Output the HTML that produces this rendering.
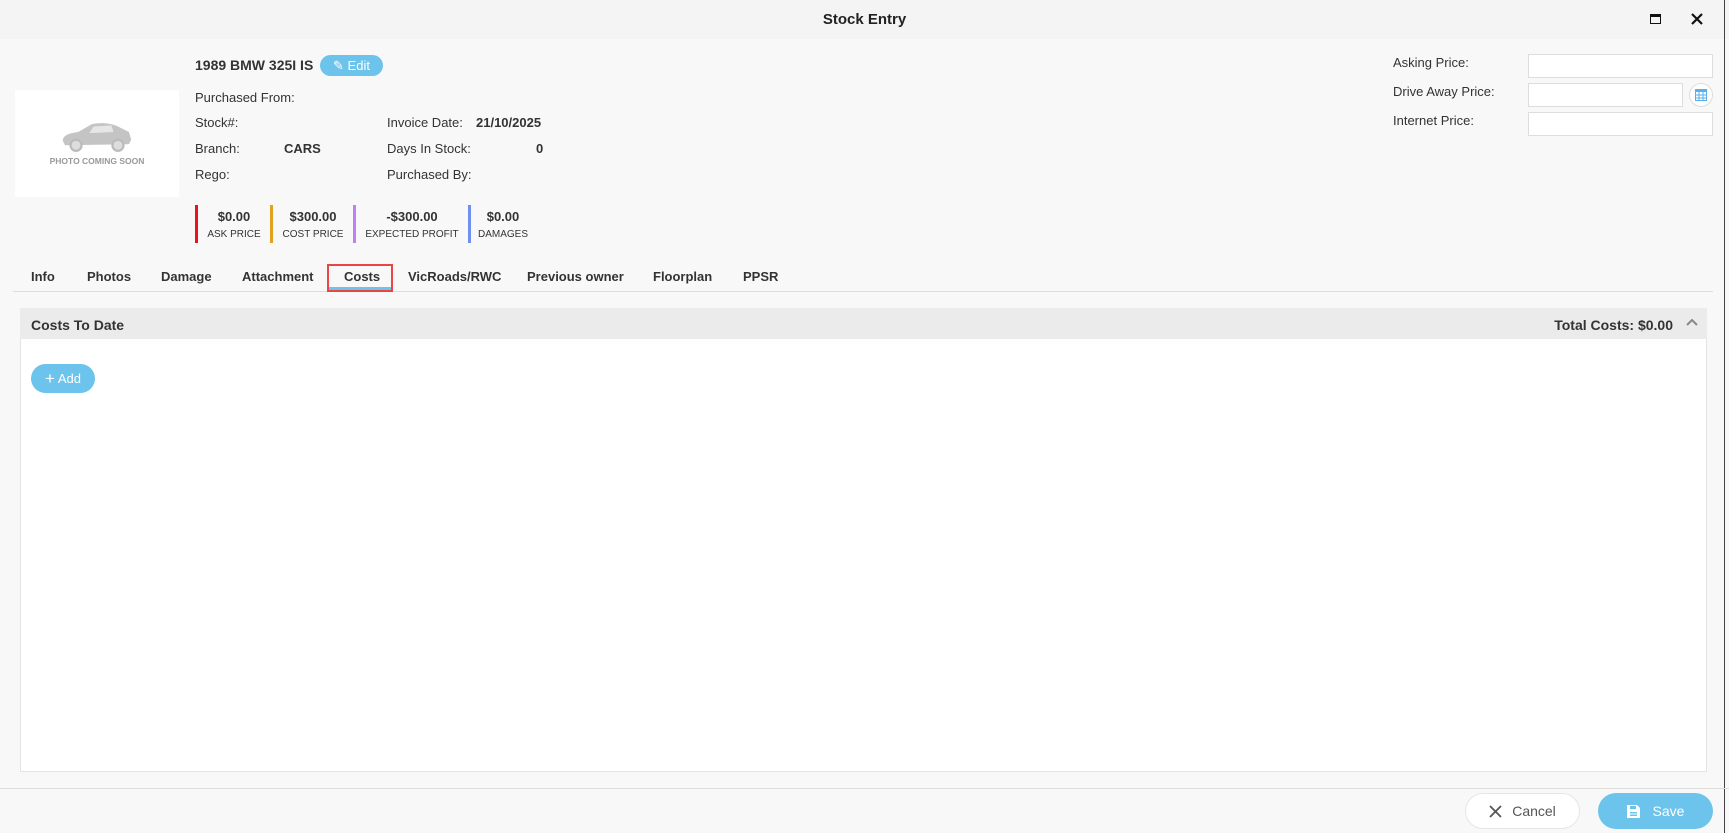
<!DOCTYPE html>
<html><head><style>
*{box-sizing:border-box;margin:0;padding:0}
body{width:1729px;height:833px;background:#f8f8f8;font-family:"Liberation Sans",sans-serif;color:#333;position:relative;overflow:hidden;font-size:13px}
.a{position:absolute;white-space:nowrap}
.b{font-weight:bold}
.inp{position:absolute;background:#fff;border:1px solid #ddd}
.btn{display:flex;align-items:center;justify-content:center}
</style></head><body>
<div class="a" style="left:0;top:0;width:1729px;height:39px;background:#f4f4f4"></div>
<div class="a b" style="left:0;width:1729px;top:11px;text-align:center;font-size:15px;color:#222">Stock Entry</div>
<div class="a" style="left:1650px;top:14px;width:11px;height:10px;border:1.5px solid #111;border-top-width:3px"></div>
<svg class="a" style="left:1691px;top:13px" width="12" height="12"><path d="M1 1L11 11M11 1L1 11" stroke="#111" stroke-width="2.2"/></svg>

<div class="a" style="left:15px;top:90px;width:164px;height:107px;background:#fff"></div>
<svg class="a" style="left:60px;top:121px" width="74" height="32" viewBox="0 0 66 29"><path d="M2 18 C2 13 8 11 16 10 L28 3 C36 1 46 2 52 5 L62 10 L64 17 L62 21 L4 22 Z" fill="#c4c4c4"/><circle cx="14" cy="22" r="5" fill="#ddd" stroke="#bbb" stroke-width="2"/><circle cx="52" cy="22" r="5" fill="#ddd" stroke="#bbb" stroke-width="2"/><path d="M30 5 L46 4 L48 10 L26 11Z" fill="#e6e6e6"/></svg>
<div class="a" style="left:15px;width:164px;text-align:center;top:156px;font-size:8.5px;color:#999;font-weight:bold">PHOTO COMING SOON</div>

<div class="a b" style="left:195px;top:57px;font-size:14px">1989 BMW 325I IS</div>
<div class="a btn" style="left:320px;top:55px;width:63px;height:21px;border-radius:11px;background:#6cc3ec;color:#fff;font-size:13px">✎ Edit</div>
<div class="a" style="left:195px;top:90px">Purchased From:</div>
<div class="a" style="left:195px;top:115px">Stock#:</div>
<div class="a" style="left:195px;top:141px">Branch:</div>
<div class="a b" style="left:284px;top:141px">CARS</div>
<div class="a" style="left:195px;top:167px">Rego:</div>
<div class="a" style="left:387px;top:115px">Invoice Date:</div>
<div class="a b" style="left:476px;top:115px">21/10/2025</div>
<div class="a" style="left:387px;top:141px">Days In Stock:</div>
<div class="a b" style="left:536px;top:141px">0</div>
<div class="a" style="left:387px;top:167px">Purchased By:</div>

<div class="a" style="left:195px;top:205px;width:3px;height:38px;background:#e8141b"></div>
<div class="a" style="left:270px;top:205px;width:3px;height:38px;background:#e0a020"></div>
<div class="a" style="left:353px;top:205px;width:3px;height:38px;background:#c080f0"></div>
<div class="a" style="left:468px;top:205px;width:3px;height:38px;background:#7090f0"></div>
<div class="a b" style="left:198px;width:72px;text-align:center;top:209px">$0.00</div>
<div class="a" style="left:198px;width:72px;text-align:center;top:229px;font-size:10px">ASK PRICE</div>
<div class="a b" style="left:273px;width:80px;text-align:center;top:209px">$300.00</div>
<div class="a" style="left:273px;width:80px;text-align:center;top:229px;font-size:10px">COST PRICE</div>
<div class="a b" style="left:356px;width:112px;text-align:center;top:209px">-$300.00</div>
<div class="a" style="left:356px;width:112px;text-align:center;top:229px;font-size:10px">EXPECTED PROFIT</div>
<div class="a b" style="left:471px;width:64px;text-align:center;top:209px">$0.00</div>
<div class="a" style="left:471px;width:64px;text-align:center;top:229px;font-size:10px">DAMAGES</div>

<div class="a" style="left:1393px;top:55px">Asking Price:</div>
<div class="a" style="left:1393px;top:84px">Drive Away Price:</div>
<div class="a" style="left:1393px;top:113px">Internet Price:</div>
<div class="inp" style="left:1528px;top:54px;width:185px;height:24px"></div>
<div class="inp" style="left:1528px;top:83px;width:155px;height:24px"></div>
<div class="inp" style="left:1528px;top:112px;width:185px;height:24px"></div>
<div class="a" style="left:1689px;top:83px;width:24px;height:24px;border-radius:50%;border:1px solid #ddd;background:#fff"></div>
<svg class="a" style="left:1695px;top:89px" width="12" height="12"><rect x="0.5" y="0.5" width="11" height="11" fill="none" stroke="#5ab0ee"/><rect x="0" y="0" width="12" height="3" fill="#5ab0ee"/><path d="M0 6H12M0 9H12M4 3V12M8 3V12" stroke="#5ab0ee"/></svg>

<div class="a b" style="left:31px;top:269px">Info</div>
<div class="a b" style="left:87px;top:269px">Photos</div>
<div class="a b" style="left:161px;top:269px">Damage</div>
<div class="a b" style="left:242px;top:269px">Attachment</div>
<div class="a b" style="left:344px;top:269px">Costs</div>
<div class="a b" style="left:408px;top:269px">VicRoads/RWC</div>
<div class="a b" style="left:527px;top:269px">Previous owner</div>
<div class="a b" style="left:653px;top:269px">Floorplan</div>
<div class="a b" style="left:743px;top:269px">PPSR</div>
<div class="a" style="left:13px;top:291px;width:1700px;height:1px;background:#ddd"></div>
<div class="a" style="left:327px;top:264px;width:66px;height:28px;border:2px solid #e84545"></div>
<div class="a" style="left:329px;top:287px;width:62px;height:3px;background:#6cc3ec"></div>

<div class="a" style="left:20px;top:308px;width:1687px;height:464px;background:#fff;border:1px solid #e4e4e4"></div>
<div class="a" style="left:20px;top:308px;width:1687px;height:31px;background:#ebebeb"></div>
<div class="a b" style="left:31px;top:317px;font-size:14px">Costs To Date</div>
<div class="a b" style="left:1540px;width:133px;text-align:right;top:317px;font-size:14px">Total Costs: $0.00</div>
<svg class="a" style="left:1686px;top:318px" width="12" height="8"><path d="M1 7L6 2L11 7" stroke="#888" stroke-width="2" fill="none"/></svg>
<div class="a btn" style="left:31px;top:364px;width:64px;height:29px;border-radius:15px;background:#6cc3ec;color:#fff"><span style="font-size:17px;margin-right:3px">+</span>Add</div>
<div class="a" style="left:1724px;top:0;width:1px;height:833px;background:#444"></div>

<div class="a" style="left:0;top:788px;width:1729px;height:1px;background:#ddd"></div>
<div class="a btn" style="left:1465px;top:793px;width:115px;height:36px;border-radius:18px;border:1px solid #e6e6e6;background:#fff;color:#555;font-size:14px"><svg width="13" height="13" style="margin-right:10px"><path d="M1 1L12 12M12 1L1 12" stroke="#555" stroke-width="1.8"/></svg>Cancel</div>
<div class="a btn" style="left:1598px;top:793px;width:115px;height:36px;border-radius:18px;background:#6cc3ec;color:#fff;font-size:14px"><svg width="13" height="13" style="margin-right:13px"><path d="M0 0H10L13 3V13H0Z" fill="#fff"/><rect x="3" y="1" width="6" height="3" fill="#6cc3ec"/><rect x="3" y="7" width="7" height="1.5" fill="#6cc3ec"/><rect x="3" y="9.5" width="7" height="1.5" fill="#6cc3ec"/></svg>Save</div>
</body></html>
